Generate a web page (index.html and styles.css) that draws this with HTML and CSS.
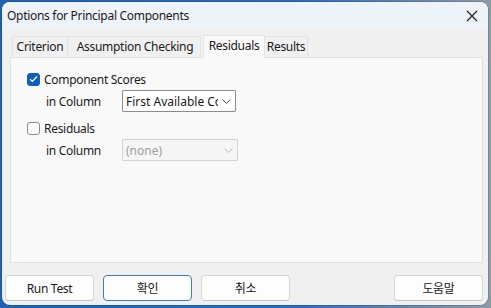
FILE: index.html
```html
<!DOCTYPE html>
<html>
<head>
<meta charset="utf-8">
<link rel="stylesheet" href="styles.css">
</head>
<body>
<div class="window">
  <div class="titlebar">
    <span class="title">Options for Principal Components</span>
    <svg class="close" width="12" height="12" viewBox="0 0 12 12"><path d="M1 1L11 11M11 1L1 11" stroke="#1a1a1a" stroke-width="1.1" fill="none"/></svg>
  </div>
  <div class="content">
    <div class="tabs">
      <div class="tab t-crit">Criterion</div>
      <div class="tab t-assum">Assumption Checking</div>
      <div class="tab active t-resid">Residuals</div>
      <div class="tab t-res">Results</div>
    </div>
    <div class="panel">
      <div class="row check-row">
        <span class="checkbox checked"><svg width="9" height="8" viewBox="0 0 9 8"><path d="M1 4.2L3.4 6.5L8 1.5" stroke="#fff" stroke-width="1.2" fill="none"/></svg></span>
        <span class="label">Component Scores</span>
      </div>
      <div class="row col-row">
        <span class="col-label">in Column</span>
        <div class="combo"><span class="combo-text">First Available Column</span><svg class="chev" width="9" height="5" viewBox="0 0 9 5"><path d="M0.5 0.5L4.5 4.5L8.5 0.5" stroke="#555" stroke-width="1" fill="none"/></svg></div>
      </div>
      <div class="row check-row second">
        <span class="checkbox"></span>
        <span class="label">Residuals</span>
      </div>
      <div class="row col-row">
        <span class="col-label">in Column</span>
        <div class="combo disabled"><span class="combo-text">(none)</span><svg class="chev" width="9" height="5" viewBox="0 0 9 5"><path d="M0.5 0.5L4.5 4.5L8.5 0.5" stroke="#bbb" stroke-width="1" fill="none"/></svg></div>
      </div>
    </div>
    <div class="buttons">
      <button class="btn">Run Test</button>
      <button class="btn default">확인</button>
      <button class="btn">취소</button>
      <span class="spacer"></span>
      <button class="btn">도움말</button>
    </div>
  </div>
</div>
</body>
</html>
```
FILE: styles.css
```css
* { box-sizing: border-box; }
html, body { margin: 0; padding: 0; }
body {
  width: 491px;
  height: 308px;
  background: linear-gradient(90deg, #1f62b5 0%, #2a6cc0 60%, #8e9aa6 100%);
  padding: 2px 3px 3px 2px;
  font-family: "Noto Sans", "Noto Sans CJK KR", sans-serif;
  font-size: 12px;
  letter-spacing: -0.3px;
  color: #1a1a1a;
  overflow: hidden;
}
.window {
  width: 486px;
  height: 303px;
  border-radius: 8px;
  background: #f0f0f0;
  overflow: hidden;
  display: flex;
  flex-direction: column;
  box-shadow: 0 0 0 1px rgba(0,0,0,0.15);
}
.titlebar {
  height: 27px;
  background: #eef3fa;
  display: flex;
  align-items: center;
  padding-left: 5px;
  padding-right: 8px;
  flex-shrink: 0;
}
.title { flex: 1; font-size: 12px; }
.close { margin-right: 2px; }
.content {
  flex: 1;
  display: flex;
  flex-direction: column;
  padding: 6px 5px 0 8px;
}
.tabs {
  display: flex;
  align-items: flex-end;
  height: 22px;
  padding-left: 2px;
}
.tab {
  height: 21px;
  line-height: 20px;
  text-align: center;
  background: #f0f0f0;
  border: 1px solid #e3e3e3;
  border-bottom: none;
  color: #1a1a1a;
  white-space: nowrap;
}
.t-crit { width: 56px; }
.t-assum { width: 134px; margin-left: -1px; padding-left: 2px; }
.t-resid { width: 62px; margin-left: 2px; }
.t-res { width: 44px; margin-left: -1px; }
.tab.active {
  height: 23px;
  background: #f9f9f9;
  position: relative;
  z-index: 1;
  margin-bottom: -1px;
  line-height: 19px;
}
.panel {
  height: 206px;
  background: #f9f9f9;
  border: 1px solid #e0e0e0;
  padding: 12px 0 0 16px;
  display: flex;
  flex-direction: column;
}
.row { display: flex; align-items: center; }
.check-row { height: 18px; }
.check-row.second { margin-top: 7px; }
.checkbox {
  width: 13px;
  height: 13px;
  border: 1px solid #8a8a8a;
  border-radius: 3px;
  background: #fdfdfd;
  display: flex;
  align-items: center;
  justify-content: center;
}
.checkbox.checked { background: #0f5fbd; border-color: #0f5fbd; }
.label { margin-left: 4px; }
.col-row { height: 22px; margin-top: 2px; }
.col-label { width: 95px; padding-left: 19px; }
.combo {
  width: 114px;
  height: 22px;
  border: 1px solid #8c8c8c;
  border-radius: 1px;
  background: #fff;
  display: flex;
  align-items: center;
  padding-left: 3px;
  padding-right: 4px;
}
.combo-text { flex: 1; white-space: nowrap; overflow: hidden; letter-spacing: 0; }
.combo.disabled { background: #f5f5f5; border-color: #d4d4d4; width: 116px; }
.combo.disabled .combo-text { color: #a0a0a0; }
.chev { flex-shrink: 0; margin-left: 4px; }
.buttons {
  display: flex;
  padding-top: 12px;
  margin-left: -5px;
  gap: 9px;
}
.spacer { flex: 1; }
.btn {
  width: 89px;
  height: 26px;
  background: #fdfdfd;
  border: 1px solid #d6d6d6;
  border-bottom-color: #c4c4c4;
  border-radius: 4px;
  font-family: "Noto Sans", "Noto Sans CJK KR", sans-serif;
  font-size: 12px;
  letter-spacing: -0.3px;
  color: #1a1a1a;
  padding: 0;
}
.btn.default { border: 1px solid #3d7cc9; }
```
